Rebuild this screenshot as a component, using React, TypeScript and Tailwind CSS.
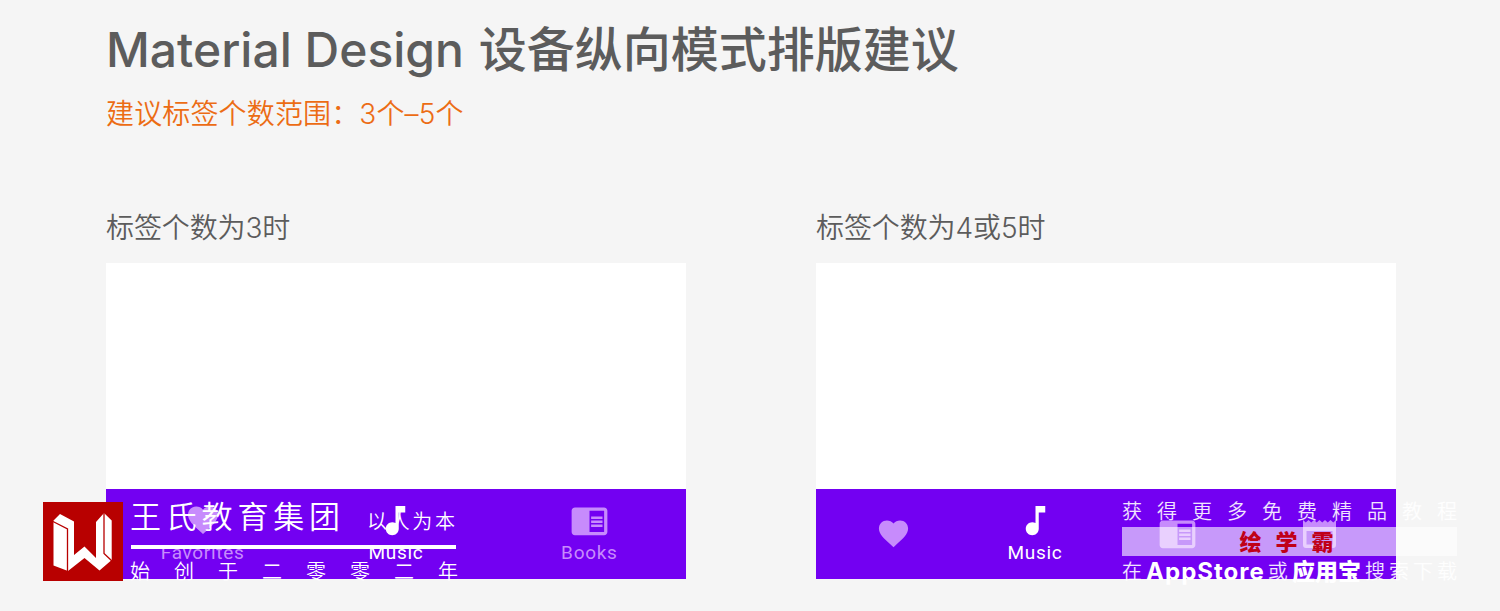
import type { ReactNode } from "react"

const HEART = "M12 21.35l-1.45-1.32C5.4 15.36 2 12.28 2 8.5 2 5.42 4.42 3 7.5 3c1.74 0 3.41.81 4.5 2.09C13.09 3.81 14.76 3 16.5 3 19.58 3 22 5.42 22 8.5c0 3.78-3.4 6.86-8.55 11.54L12 21.35z"
const NOTE = "M12 3v10.55c-.59-.34-1.27-.55-2-.55-2.21 0-4 1.79-4 4s1.79 4 4 4 4-1.79 4-4V7h4V3h-6z"
const READER = "M13 12h7v1.5h-7zm0-2.5h7V11h-7zm0 5h7V16h-7zM21 4H3c-1.1 0-2 .9-2 2v13c0 1.1.9 2 2 2h18c1.1 0 2-.9 2-2V6c0-1.1-.9-2-2-2zm0 15h-9V6h9v13z"

const CJK = "font-['Inter','Noto_Sans_CJK_SC',sans-serif]"

function Icon({ d, className }: { d: string; className: string }) {
  return (
    <svg viewBox="0 0 24 24" fill="currentColor" className={`shrink-0 ${className}`}>
      <path d={d} />
    </svg>
  )
}

function NewsIcon() {
  return (
    <svg viewBox="0 0 33 30" fill="currentColor" className="h-[30px] w-[33px] shrink-0">
      <path fillRule="evenodd" d="M0 1l2.750 2.500L5.500 1l2.750 2.500L11 1l2.750 2.500L16.500 1l2.750 2.500L22 1l2.750 2.500L27.500 1l2.750 2.500L33 1v25a3 3 0 0 1-3 3H3a3 3 0 0 1-3-3zM3.500 12v13.500h26V12z" />
    </svg>
  )
}

interface TabProps {
  icon: ReactNode
  label?: string
  active?: boolean
}

function Tab({ icon, label, active }: TabProps) {
  return (
    <div className={`flex flex-1 flex-col items-center ${label ? "pt-3" : "justify-center"} ${active ? "text-white" : "text-[#c78bfc]"}`}>
      <div className="flex h-[39px] items-center pb-px">{icon}</div>
      {label && <span className="mt-0.5 font-[Roboto,sans-serif] text-[19px] leading-[22px] tracking-[0.7px]">{label}</span>}
    </div>
  )
}

function Demo({ title, padded, children }: { title: string; padded?: boolean; children: ReactNode }) {
  return (
    <section className="w-[580px] shrink-0">
      <h2 className="text-[28px] leading-9 font-[350] tracking-[-0.1px] text-[#5c5c5c]">{title}</h2>
      <div className="mt-[17px] flex h-[316px] flex-col justify-end bg-white">
        <div className={`flex h-[90px] bg-[#7300f2] ${padded ? "px-1.5" : ""}`}>{children}</div>
      </div>
    </section>
  )
}

function Spread({ text, className }: { text: string; className: string }) {
  return (
    <div className={`flex justify-between ${className}`}>
      {[...text].map((char, i) => <span key={i}>{char}</span>)}
    </div>
  )
}

function Brand() {
  return (
    <div className="absolute top-[502px] left-[43px] flex text-white">
      <svg viewBox="0 0 80 79" className="h-[79px] w-20">
        <path fill="#b80000" d="M0 0h80v79H0z" />
        <path fill="#fff" d="M10.500 18.500L17 12l14 7.500V53l10.500-8.500L53 56V20l8-9 7.700 7.500V58L56.500 68.500 41.500 56 25 69l-14.500-5.500z" />
        <path fill="none" stroke="#b80000" strokeWidth="1.300" d="M10 19.500L24.500 27v43M61 9v42.500l8.500 8" />
      </svg>
      <div className="ml-[7px] w-[328px] font-[350]">
        <div className="ml-px flex w-[325px] items-center justify-between">
          <Spread text="王氏教育集团" className="-mt-px -ml-px w-[210px] text-[31px] leading-[31px]" />
          <Spread text="以人为本" className="mt-2.5 mr-px w-[88px] text-xl leading-5" />
        </div>
        <div className="mt-[13px] ml-px h-1 w-[325px] bg-white" />
        <Spread text="始创于二零零二年" className="mt-[13px] text-xl leading-5" />
      </div>
    </div>
  )
}

function Download() {
  return (
    <div className="absolute top-[502px] left-[1122px] w-[335px] font-[350] text-white/90">
      <Spread text="获得更多免费精品教程" className="text-xl leading-5" />
      <div className="mt-[5px] flex h-[29px] justify-center bg-white/60">
        <Spread text="绘学霸" className="-ml-1.5 w-[94px] text-[22px] leading-[30px] font-black text-[#c00018]" />
      </div>
      <div className="mt-1 flex items-center justify-between text-xl leading-6 whitespace-nowrap">
        <span>在</span>
        <b className="-mr-px text-2xl leading-6 font-bold tracking-[1px] text-white">AppStore</b>
        <span>或</span>
        <b className="text-[23px] leading-6 font-black text-white">应用宝</b>
        <span className="-mr-1 tracking-[4px]">搜索下载</span>
      </div>
    </div>
  )
}

export default function App() {
  return (
    <main className={`relative h-[611px] w-[1500px] overflow-hidden bg-[#f5f5f5] px-[106px] ${CJK}`}>
      <h1 className="pt-5 text-5xl leading-[60px] font-medium whitespace-nowrap text-[#5c5c5c]">
        <span className="mr-0.5">Material Design </span>设备纵向模式排版建议
      </h1>
      <p className="mt-4 text-[28px] leading-9 font-[350] tracking-[0.15px] text-[#ec6c14]">建议标签个数范围：3个–5个</p>
      <div className="mt-[78px] flex gap-[130px]">
        <Demo title="标签个数为3时">
          <Tab icon={<Icon d={HEART} className="size-9" />} label="Favorites" />
          <Tab icon={<Icon d={NOTE} className="size-[39px]" />} label="Music" active />
          <Tab icon={<Icon d={READER} className="size-[39px]" />} label="Books" />
        </Demo>
        <Demo title="标签个数为4或5时" padded>
          <Tab icon={<Icon d={HEART} className="size-[35px]" />} />
          <Tab icon={<Icon d={NOTE} className="size-[39px]" />} label="Music" active />
          <Tab icon={<Icon d={READER} className="size-[39px]" />} />
          <Tab icon={<NewsIcon />} />
        </Demo>
      </div>
      <Brand />
      <Download />
    </main>
  )
}
